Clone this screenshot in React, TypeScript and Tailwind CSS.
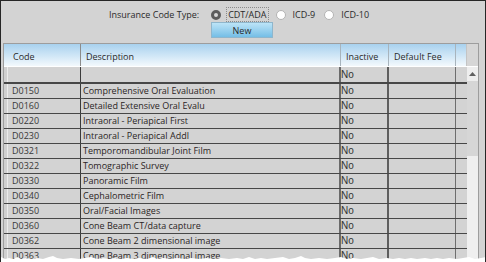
import React from "react";

const ROWS: [string, string][] = [
  ["D0150", "Comprehensive Oral Evaluation"],
  ["D0160", "Detailed Extensive Oral Evalu"],
  ["D0220", "Intraoral - Periapical First"],
  ["D0230", "Intraoral - Periapical Addl"],
  ["D0321", "Temporomandibular Joint Film"],
  ["D0322", "Tomographic Survey"],
  ["D0330", "Panoramic Film"],
  ["D0340", "Cephalometric Film"],
  ["D0350", "Oral/Facial Images"],
  ["D0360", "Cone Beam CT/data capture"],
  ["D0362", "Cone Beam 2 dimensional image"],
  ["D0363", "Cone Beam 3 dimensional image"],
];

const ui = "font-['Open_Sans',sans-serif] text-[9px] text-[#2a2a2a]";
const no = "font-['Liberation_Sans',sans-serif] text-[10px] text-[#333] leading-[14px]";

function Radio({ checked, label }: { checked?: boolean; label: string }) {
  return (
    <div className="flex items-center">
      {checked ? (
        <div className="w-[10px] h-[10px] rounded-full border-[3px] border-[#5c5c5c] bg-[#d8d8d8]" />
      ) : (
        <div className="w-[10px] h-[10px] rounded-full border border-[#b4b4b4] bg-white" />
      )}
      <span
        className={`ml-[6px] px-[1px] leading-[13px] ${ui} ${checked ? "outline outline-1 outline-dotted outline-[#8a8a8a]" : ""}`}
      >
        {label}
      </span>
    </div>
  );
}

function Row({ code, desc }: { code: string; desc: string }) {
  return (
    <div className="flex h-[15px] shrink-0 border-b border-[#474747]">
      <div className={`w-[77px] shrink-0 border-r border-[#3a3a3a] pl-[8px] leading-[14px] shadow-[inset_3px_0_0_#d0d0d0,inset_4px_0_0_#ebebeb] ${ui} text-[#383838]`}>
        {code}
      </div>
      <div className={`w-[260px] shrink-0 border-r-2 border-[#6a6a6a] pl-[2px] leading-[14px] ${ui} text-[#2b2525]`}>{desc}</div>
      <div className={`w-[48px] shrink-0 border-r-2 border-[#5e5e5e] ${no}`}>No</div>
      <div className="w-[67px] shrink-0 border-r border-[#6e6e6e]" />
      <div className="w-[11px] shrink-0" />
    </div>
  );
}

export default function App() {
  return (
    <div className="relative w-[486px] h-[262px] overflow-hidden bg-[#d3d3d3] border-t border-l border-r border-[#262626]">
      {/* Toolbar */}
      <div className="flex items-center h-[15px] mt-[6px] pl-[108px]">
        <span className={`${ui} leading-[13px]`}>Insurance Code Type:</span>
        <div className="flex items-center gap-[8px] ml-[12px]">
          <Radio checked label="CDT/ADA" />
          <Radio label="ICD-9" />
          <Radio label="ICD-10" />
        </div>
      </div>
      <div className="ml-[210px] w-[62px] h-[16px] border border-[#8fb6cc] bg-gradient-to-b from-[#bce4f7] to-[#74bee6] flex items-center justify-center">
        <span className={`${ui} leading-[13px]`}>New</span>
      </div>

      {/* Grid */}
      <div className="ml-[2px] mt-[5px] w-[476px] h-[230px] border border-[#9d9d9d] flex flex-col overflow-hidden">
        <div className="flex h-[23px] shrink-0 border-b border-white">
          <div className="flex flex-1 bg-gradient-to-b from-[#a8d1ee] to-[#f3f9fd]">
            <div className={`w-[77px] shrink-0 border-r border-[#8c8c8c] pl-[9px] pt-[3px] flex items-center ${ui}`}>Code</div>
            <div className={`w-[260px] shrink-0 border-r border-[#a8b4bd] pl-[5px] pt-[3px] flex items-center ${ui}`}>Description</div>
            <div className={`w-[48px] shrink-0 border-r border-[#a8b4bd] pl-[5px] pt-[3px] flex items-center ${ui}`}>Inactive</div>
            <div className={`w-[67px] shrink-0 border-r border-[#a8b4bd] pl-[5px] pt-[3px] flex items-center ${ui}`}>Default Fee</div>
            <div className="w-[11px] shrink-0 border-r border-[#c4c4c4]" />
          </div>
          <div className="w-[11px] shrink-0 bg-[#d6d6d6]" />
        </div>
        <div className="flex flex-1 min-h-0">
          <div className="w-[463px] shrink-0 flex flex-col">
            <div className="flex h-[17px] shrink-0 border-b-2 border-[#474747]">
              <div className="w-[77px] shrink-0 border-r border-[#3a3a3a] shadow-[inset_3px_0_0_#d0d0d0,inset_4px_0_0_#ebebeb]" />
              <div className="w-[260px] shrink-0 border-r-2 border-[#6a6a6a]" />
              <div className={`w-[48px] shrink-0 border-r-2 border-[#5e5e5e] pt-[1px] ${no}`}>No</div>
              <div className="w-[67px] shrink-0 border-r border-[#6e6e6e]" />
              <div className="w-[11px] shrink-0" />
            </div>
            {ROWS.map(([c, d]) => (
              <Row key={c} code={c} desc={d} />
            ))}
          </div>
          {/* Scrollbar */}
          <div className="w-[11px] shrink-0 flex flex-col bg-[#d6d6d6]">
            <div className="h-[14px] shrink-0 bg-[#eeeeee] flex items-center justify-center">
              <svg width="7" height="4" viewBox="0 0 7 4">
                <polygon points="0,4 3.5,0 7,4" fill="#606060" />
              </svg>
            </div>
            <div className="h-[75px] shrink-0" />
            <div className="flex-1 bg-[#efefef]" />
          </div>
        </div>
      </div>

      {/* Torn bottom edge */}
      <svg className="absolute left-0 bottom-0" width="486" height="8" viewBox="0 0 486 8">
        <polygon
          fill="#ffffff"
          points="0,3 4,5 8,4 12,5 16,3 20,5 24,4 30,5 36,4 42,5 48,3 52,2 56,4 62,5 70,4 78,5 84,4 90,3 96,5 102,4 108,5 114,4 120,5 126,4 132,5 138,4 146,5 152,3 156,5 162,4 170,5 176,4 184,5 190,4 198,5 206,4 214,5 220,4 228,5 236,4 242,5 248,3 254,5 260,4 266,5 274,4 282,3 288,5 294,4 300,2 304,4 310,5 318,4 326,5 334,4 340,3 346,5 352,4 360,5 366,4 372,3 378,5 386,4 392,5 398,4 404,5 410,4 416,5 424,4 430,5 436,4 442,5 448,4 456,5 462,4 468,3 474,5 480,4 486,3 486,8 0,8"
        />
      </svg>
    </div>
  );
}
